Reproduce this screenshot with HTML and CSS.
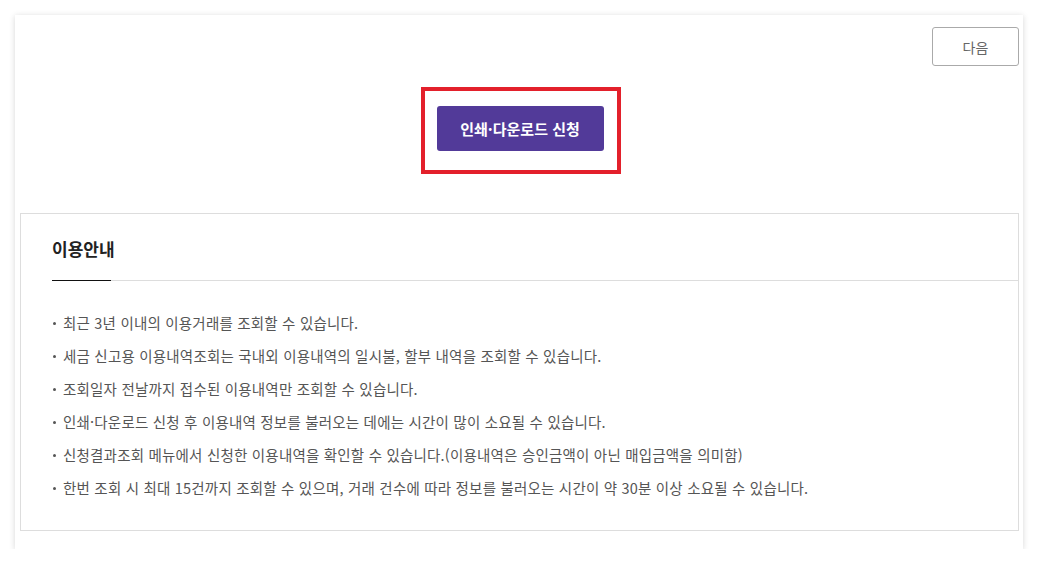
FILE: index.html
```html
<!DOCTYPE html>
<html lang="ko">
<head>
<meta charset="utf-8">
<link rel="stylesheet" href="styles.css">
</head>
<body>
<div class="card">
  <div class="top-row">
    <button class="btn-next">다음</button>
  </div>
  <div class="apply-wrap">
    <div class="highlight">
      <button class="btn-apply">인쇄·다운로드 신청</button>
    </div>
  </div>
  <section class="guide">
    <div class="guide-head">
      <h2 class="guide-title">이용안내</h2>
    </div>
    <ul class="guide-list">
      <li>최근 3년 이내의 이용거래를 조회할 수 있습니다.</li>
      <li>세금 신고용 이용내역조회는 국내외 이용내역의 일시불, 할부 내역을 조회할 수 있습니다.</li>
      <li>조회일자 전날까지 접수된 이용내역만 조회할 수 있습니다.</li>
      <li>인쇄·다운로드 신청 후 이용내역 정보를 불러오는 데에는 시간이 많이 소요될 수 있습니다.</li>
      <li>신청결과조회 메뉴에서 신청한 이용내역을 확인할 수 있습니다.(이용내역은 승인금액이 아닌 매입금액을 의미함)</li>
      <li>한번 조회 시 최대 15건까지 조회할 수 있으며, 거래 건수에 따라 정보를 불러오는 시간이 약 30분 이상 소요될 수 있습니다.</li>
    </ul>
  </section>
</div>
</body>
</html>
```

FILE: styles.css
```css
* { box-sizing: border-box; }
html, body { margin: 0; padding: 0; background: #fff; }
body {
  font-family: "Noto Sans CJK KR", "Noto Sans", "Liberation Sans", sans-serif;
  color: #555;
}
.card {
  margin: 15px 0 0 15px;
  width: 1008px;
  height: 534px;
  background: #fff;
  box-shadow: 0 1px 6px rgba(0, 0, 0, 0.16);
  padding: 12px 4px 0 5px;
  display: flex;
  flex-direction: column;
}
.top-row {
  display: flex;
  justify-content: flex-end;
}
.btn-next {
  width: 87px;
  height: 39px;
  border: 1px solid #aaa;
  border-radius: 3px;
  background: #fff;
  color: #666;
  font-family: inherit;
  font-size: 14px;
  padding: 0;
}
.apply-wrap {
  display: flex;
  justify-content: center;
  margin-top: 21px;
  padding-left: 3px;
}
.highlight {
  width: 200px;
  height: 87px;
  border: 4px solid #e3202b;
  display: flex;
  align-items: center;
  justify-content: center;
  padding: 0 2px 4px 0;
}
.btn-apply {
  width: 167px;
  height: 45px;
  background: #523a99;
  border: none;
  border-radius: 3px;
  color: #fff;
  font-family: inherit;
  font-size: 15px;
  font-weight: 700;
  padding: 0;
}
.guide {
  margin-top: 39px;
  border: 1px solid #ddd;
  height: 318px;
}
.guide-head {
  margin-left: 31px;
  border-bottom: 1px solid #ddd;
  padding: 23px 0 19px;
  position: relative;
}
.guide-head::after {
  content: "";
  position: absolute;
  left: 0;
  bottom: -1px;
  width: 59px;
  height: 1px;
  background: #111;
}
.guide-title {
  margin: 0;
  font-size: 17px;
  line-height: 24px;
  font-weight: 700;
  color: #222;
}
.guide-list {
  list-style: none;
  margin: 0;
  padding: 25px 0 0 31px;
}
.guide-list li {
  position: relative;
  padding-left: 11px;
  font-size: 14.5px;
  line-height: 33px;
  color: #555;
  letter-spacing: 0.2px;
}
.guide-list li::before {
  content: "";
  position: absolute;
  left: 1px;
  top: 16px;
  width: 3px;
  height: 3px;
  border-radius: 50%;
  background: #555;
}
```
